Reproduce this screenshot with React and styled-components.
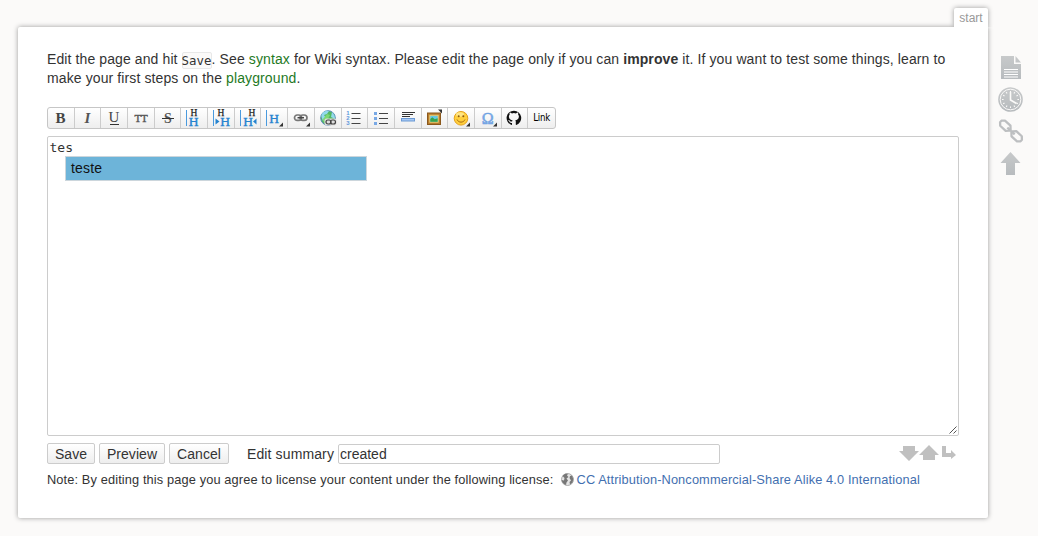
import React from "react";
import styled, { createGlobalStyle } from "styled-components";

const Global = createGlobalStyle`
  *, *::before, *::after { box-sizing: border-box; }
  body {
    margin: 0;
    background: #fbfaf9;
    color: #333;
    font: 14px/19px Arial, "Liberation Sans", sans-serif;
    overflow: hidden;
  }
`;

const Site = styled.div`
  display: flex;
  align-items: flex-start;
  width: 1038px;
  height: 536px;
  padding: 8px 0 0 18px;
`;
const Main = styled.main`
  display: flex;
  flex-direction: column;
  width: 970px;
`;
const PageId = styled.div`
  align-self: flex-end;
  z-index: 1;
  width: 34px;
  height: 19px;
  background: #fff;
  border-radius: 2px 2px 0 0;
  box-shadow: 0 0 5px #999;
  clip-path: inset(-8px -8px 0 -8px);
  color: #999;
  font-size: 12px;
  line-height: 20px;
  text-align: center;
`;
const Page = styled.section`
  height: 491px;
  padding: 23px 29px 0;
  background: #fff;
  border-radius: 2px 0 2px 2px;
  box-shadow: 0 0 5px #999;
`;
const Intro = styled.p`
  margin: 0 0 19px;
  white-space: nowrap;
`;
const Line = styled.span`
  display: block;
  height: 19px;
  letter-spacing: ${(p) => p.$track || 0}px;
`;
const Code = styled.code`
  display: inline-block;
  height: 17px;
  width: 30px;
  line-height: 15px;
  vertical-align: -1px;
  margin-top: -3px;
  border: 1px solid #e8e8e8;
  border-radius: 2px;
  background: #fbfaf9;
  font-family: "DejaVu Sans Mono", monospace;
  font-size: 12.4px;
  letter-spacing: 0;
  text-indent: -1px;
`;
const WikiLink = styled.a`
  color: #1f7a1f;
`;
const Toolbar = styled.div`
  display: grid;
  grid-template-columns: repeat(19, 1fr);
  width: 509px;
  height: 22px;
  border: 1px solid #c6c6c6;
  border-radius: 3px;
  background: linear-gradient(#fff, #eee);
`;
const Tool = styled.div`
  display: flex;
  align-items: center;
  justify-content: center;
  height: 20px;
  border-right: 1px solid #ccc;
  &:last-child { border-right: 0; }
  svg { display: block; overflow: visible; }
`;
const LinkLabel = styled.span`
  color: #000;
  font: 9.6px/20px "DejaVu Sans Condensed", "DejaVu Sans", sans-serif;
  letter-spacing: -0.2px;
`;
const Editor = styled.div`
  position: relative;
  margin-top: 7px;
  height: 300px;
`;
const TextArea = styled.textarea`
  display: block;
  width: 912px;
  height: 300px;
  padding: 2px 1.5px;
  border: 1px solid #ccc;
  border-radius: 2px;
  background: #fff;
  color: #333;
  font: 13px/18px "DejaVu Sans Mono", monospace;
  resize: none;
  outline: none;
`;
const Suggestion = styled.div`
  position: absolute;
  left: 18px;
  top: 20px;
  width: 302px;
  height: 25px;
  padding-left: 5px;
  border: 1px solid #ccd6dc;
  background: #6db4d9;
  color: #111;
  letter-spacing: 0.15px;
  line-height: 23px;
`;
const Grip = styled.svg`
  position: absolute;
  left: 901px;
  bottom: 1px;
`;
const EditBar = styled.div`
  display: flex;
  align-items: flex-start;
  width: 912px;
  margin-top: 7px;
  height: 22px;
`;
const Button = styled.button`
  width: ${(p) => p.$w}px;
  height: 21px;
  margin: 0 4px 0 0;
  padding: 1px 0 0;
  border: 1px solid #ccc;
  border-radius: 2px;
  background: linear-gradient(#fff, #eee);
  color: #333;
  font: 14px/19px Arial, "Liberation Sans", sans-serif;
  letter-spacing: 0.05px;
`;
const Summary = styled.label`
  display: flex;
  margin-left: 14px;
  line-height: 22px;
  white-space: nowrap;
  span { width: 91px; letter-spacing: 0.12px; }
`;
const SummaryInput = styled.input`
  width: 382px;
  height: 20px;
  margin: 1px 0 0;
  padding: 0 0 0 1px;
  border: 1px solid #ccc;
  border-radius: 2px;
  color: #333;
  font: 14px/18px Arial, "Liberation Sans", sans-serif;
  outline: none;
`;
const SizeControls = styled.div`
  display: flex;
  margin-left: auto;
`;
const License = styled.div`
  display: flex;
  align-items: center;
  height: 18px;
  margin-top: 5px;
  font-size: 12.8px;
  white-space: nowrap;
  svg { margin: 0 3px 0 7px; }
`;
const LicenseText = styled.span`
  padding-top: 1px;
  letter-spacing: 0.12px;
`;
const LicenseLink = styled(LicenseText).attrs({ as: "a" })`
  color: #436fb0;
`;
const PageTools = styled.aside`
  display: flex;
  flex-direction: column;
  gap: 6px;
  margin: 47px 0 0 10px;
  svg { display: block; }
`;

const Icon = ({ children, size = 16 }) => (
  <svg width={size} height={size} viewBox="0 0 16 16">{children}</svg>
);
const serif = '"Liberation Serif", serif';
const Letter = ({ x = 8, y = 13, size = 15, fill = "#444", children, ...rest }) => (
  <text x={x} y={y} fontSize={size} fontFamily={serif} fill={fill} textAnchor="middle" {...rest}>{children}</text>
);
const BlueH = ({ x, y = 16 }) => (
  <Letter x={x} y={y} size={13.5} fill="#2583cf" stroke="#2583cf" strokeWidth="0.35">H</Letter>
);
const BlackH = ({ x }) => (
  <Letter x={x} y={6} size={9.5} fill="#222" stroke="#222" strokeWidth="0.25">H</Letter>
);
const Corner = ({ up }) => <path d={up ? "M12 -0.5h4v4z" : "M17 12.5v4h-4z"} fill="#333" />;
const Bar = ({ x = 1 }) => <path d={`M${x}.5 0v16`} stroke="#4a9ade" strokeWidth="1" />;
const ChainSmall = ({ x = 0, y = 0 }) => (
  <g transform={`translate(${x} ${y})`} fill="none">
    <rect x="1.5" y="5" width="7" height="5.4" rx="2.7" stroke="#777" strokeWidth="1.7" />
    <rect x="7" y="5" width="7" height="5.4" rx="2.7" stroke="#777" strokeWidth="1.7" />
    <path d="M4.5 7.7h6.500" stroke="#444" strokeWidth="1.5" />
  </g>
);

const tools = [
  <Icon key="b"><Letter x={7.5} fontWeight="bold">B</Letter></Icon>,
  <Icon key="i"><Letter x={7.5} fontWeight="bold" fontStyle="italic" fill="#555">I</Letter></Icon>,
  <Icon key="u"><Letter y={12}>U</Letter><path d="M4 14.5h9" stroke="#333" /></Icon>,
  <Icon key="tt"><Letter x={4.9} y={12} size={11} fill="#555" stroke="#555" strokeWidth="0.4">T</Letter><Letter x={11.3} y={12} size={11} fill="#555" stroke="#555" strokeWidth="0.4">T</Letter></Icon>,
  <Icon key="s"><Letter fontWeight="bold" size={14} fill="#555">S</Letter><path d="M2 8.5h12" stroke="#333" /></Icon>,
  <Icon key="h1"><Bar x={0} /><BlackH x={8} /><BlueH x={7.7} /></Icon>,
  <Icon key="h2"><Bar x={0} /><BlackH x={8} /><path d="M2.500 8.5l4 3-4 3z" fill="#2583cf" /><BlueH x={12} /></Icon>,
  <Icon key="h3"><Bar x={0} /><BlackH x={12} /><BlueH x={8} /><path d="M16.5 8.5l-3.500 3 3.500 3z" fill="#2583cf" /></Icon>,
  <Icon key="h4"><Bar x={0} /><BlueH x={8} y={12.7} /><Corner /></Icon>,
  <Icon key="link"><ChainSmall /><Corner /></Icon>,
  <Icon key="web">
    <circle cx="8" cy="8" r="7.3" fill="#54b862" stroke="#5788bc" />
    <path d="M1.5 7C1 2 6 0 9 1L7 4 4 5l2 3-3 3zM12 2c2 2 3 4 3 7l-4-2z" fill="#92d9ec" />
    <path d="M3 9l4-5 3 1-2 4-4 4z" fill="#7ed774" />
    <rect x="4.5" y="8.5" width="12" height="7" rx="2" fill="#ddd" />
    <rect x="6" y="10" width="5" height="4" rx="2" fill="none" stroke="#444" strokeWidth="1.2" />
    <rect x="10.5" y="10" width="5" height="4" rx="2" fill="none" stroke="#444" strokeWidth="1.2" />
  </Icon>,
  <Icon key="ol">
    {[1, 2, 3].map((n) => <text key={n} x="0.2" y={n * 5 + 0.3} fontSize="6" fontFamily="Liberation Sans, sans-serif" fontWeight="bold" fill="#6098dc">{n}</text>)}
    <path d="M5.5 3.5h9M5.5 8.5h9M5.5 13.5h9" stroke="#444" />
  </Icon>,
  <Icon key="ul">
    <path d="M1 2h3v3H1zM1 7h3v3H1zM1 12h3v3H1z" fill="#78a8e5" />
    <path d="M6 3.5h9M6 8.5h9M6 13.5h9" stroke="#444" />
  </Icon>,
  <Icon key="hr">
    <path d="M2 2.500h13M2 4.500h11M2 6.500h8" stroke="#333" strokeWidth="1" />
    <rect x="1.5" y="8.5" width="13" height="2.500" fill="#a8c9f4" stroke="#6b99d4" />
  </Icon>,
  <Icon key="img">
    <rect x="1.5" y="3" width="13" height="11.5" fill="#b67b2d" stroke="#8a581c" />
    <rect x="3.8" y="5.3" width="8.4" height="6.9" fill="#62c9e4" stroke="#f0c969" />
    <path d="M4.3 9l2-1.7 2.5 2 2.8-1v3.4H4.3z" fill="#38a34a" /><Corner up />
  </Icon>,
  <Icon key="smile">
    <circle cx="8" cy="8.300" r="6.8" fill="#ffcf3d" stroke="#e5a11b" />
    <ellipse cx="7" cy="4.5" rx="4" ry="2.2" fill="#ffe584" />
    <circle cx="5.7" cy="6.3" r="1" fill="#8d5a0e" /><circle cx="10.3" cy="6.3" r="1" fill="#8d5a0e" />
    <path d="M4 9.5c1.5 3.5 6.5 3.5 8 0" fill="none" stroke="#a66a12" /><Corner />
  </Icon>,
  <Icon key="omega"><Letter size={16} y={14} x={7.7} fill="#79a9e8" stroke="#6a9de0" strokeWidth="0.5">Ω</Letter><Corner /></Icon>,
  <Icon key="git" size={16}><path fill="#111" d="M8 .7a7.3 7.3 0 0 0-2.5 14.2c.4.1.5-.2.5-.4v-1.6c-2 .4-2.5-.8-2.7-1.3-.1-.3-.5-.9-.8-1.1-.3-.2-.7-.6 0-.6s1.1.6 1.3.8c.7 1.2 1.8.9 2.3.7.1-.5.3-.9.5-1.1-1.8-.2-3.7-.9-3.7-3.7 0-.8.3-1.5.8-2-.1-.2-.4-1 .1-2 0 0 .7-.2 2.1.8a7 7 0 0 1 4 0c1.4-1 2-.8 2-.8.6 1 .2 1.8.2 2 .5.5.8 1.2.8 2 0 2.8-1.900 3.500-3.700 3.700.3.300.6.800.6 1.500v2.700c0 .2.1.500.5.400A7.300 7.300 0 0 0 8 .7" /></Icon>,
  <LinkLabel key="text">Link</LinkLabel>,
];

const Globe = () => (
  <svg width="13" height="13" viewBox="0 0 13 13">
    <circle cx="6.5" cy="6.5" r="6" fill="#e4e4e4" stroke="#999" strokeWidth=".8" />
    <path d="M1.500 3C3 .8 5 .4 7 .8L6 2.500 7.500 4 5.500 5.500 7 7.500 5.500 9.500 5 12C3 11.500 1 9.500 .6 7L3 7.500 3.500 5zM9 3l2-.5L12.300 6 11.500 9.500 9 11.500 8.500 9 10 7.500 8.500 5z" fill="#777" />
  </svg>
);

const ticks = Array.from({ length: 12 }, (_, i) => i * 30);

export default function App() {
  return (
    <>
      <Global />
      <Site>
        <Main>
          <PageId>start</PageId>
          <Page>
            <Intro>
              <Line $track={0.103}>Edit the page and hit <Code>Save</Code>. See <WikiLink>syntax</WikiLink> for Wiki syntax. Please edit the page only if you can <b>improve</b> it. If you want to test some things, learn to</Line>
              <Line $track={0.11}>make your first steps on the <WikiLink>playground</WikiLink>.</Line>
            </Intro>
            <Toolbar>{tools.map((t, i) => <Tool key={i}>{t}</Tool>)}</Toolbar>
            <Editor>
              <TextArea defaultValue="tes" spellCheck={false} />
              <Suggestion>teste</Suggestion>
              <Grip width="10" height="10" viewBox="0 0 10 10"><path d="M1.5 8.5l7-7M5.5 8.5l3-3" stroke="#555" strokeWidth="1" /></Grip>
            </Editor>
            <EditBar>
              <Button $w={48}>Save</Button>
              <Button $w={66}>Preview</Button>
              <Button $w={60}>Cancel</Button>
              <Summary><span>Edit summary</span><SummaryInput defaultValue="created" /></Summary>
              <SizeControls>
                <svg width="60" height="20" viewBox="0 0 60 20" fill="#c0c0c0">
                  <path d="M4 3h12v5h4l-10 10L0 8h4zM24 17h12v-5h4L30 2 20 12h4zM43 3h4v7h5V7l5 5-5 4v-2h-9z" />
                </svg>
              </SizeControls>
            </EditBar>
            <License>
              <LicenseText>Note: By editing this page you agree to license your content under the following license:</LicenseText>
              <Globe />
              <LicenseLink>CC Attribution-Noncommercial-Share Alike 4.0 International</LicenseLink>
            </License>
          </Page>
        </Main>
        <PageTools>
          <svg width="26" height="26" viewBox="0 0 26 26">
            <defs>
              <linearGradient id="tone" gradientUnits="userSpaceOnUse" x1="0" y1="0" x2="0" y2="26">
                <stop offset="0" stopColor="#c8cacb" /><stop offset="1" stopColor="#b6babd" />
              </linearGradient>
            </defs>
            <path d="M3 1h13v8h7v15H3z" fill="url(#tone)" /><path d="M17.5 1v6.500H23z" fill="url(#tone)" />
            <path d="M6 14.5h14M6 17h14M6 19.5h14M6 22h14" stroke="#fff" strokeWidth="1" />
          </svg>
          <svg width="26" height="26" viewBox="0 0 26 26">
            <circle cx="12.5" cy="12.5" r="12.3" fill="url(#tone)" />
            <circle cx="12.5" cy="12.5" r="10.3" fill="none" stroke="#fbfaf9" strokeWidth="1" />
            {ticks.map((a) => <path key={a} d="M12.5 4v1.6" stroke="#fbfaf9" strokeWidth="1.1" transform={`rotate(${a} 12.5 12.5)`} />)}
            <path d="M12.5 5v8l6 3.5" fill="none" stroke="#fbfaf9" strokeWidth="1.6" />
          </svg>
          <svg width="26" height="26" viewBox="0 0 26 26" fill="none" stroke="#bdbfc1" strokeWidth="2.3">
            <g transform="translate(0 -1) rotate(43 13 13)">
              <path d="M9 9.500H1.500L-1 12v2l2.500 2.500H9l2.500-2.500v-2zM17 9.500h7.500L27 12v2l-2.500 2.500H17L14.500 14v-2z" strokeLinejoin="round" />
              <path d="M8 13h10" />
            </g>
          </svg>
          <svg width="26" height="26" viewBox="0 0 26 26"><path d="M12.5 1L22.5 12H17v12H8V12H2.500z" fill="url(#tone)" /></svg>
        </PageTools>
      </Site>
    </>
  );
}
